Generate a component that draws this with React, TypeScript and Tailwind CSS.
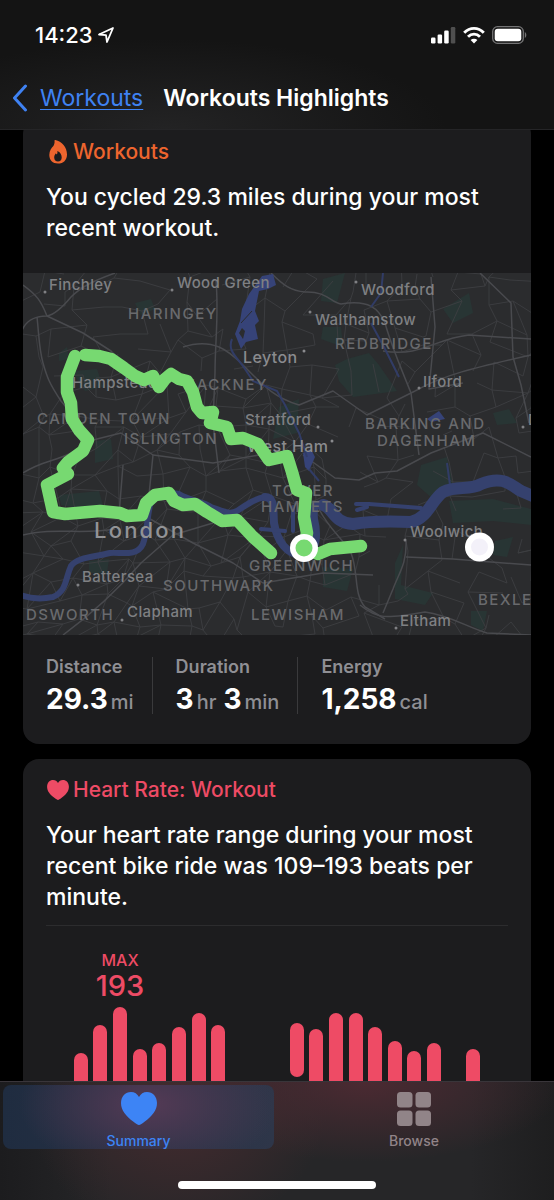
import React from 'react';
import clsx from 'clsx';

type Label = {
  text: string;
  x: number;
  y: number;
  kind: 'town' | 'large' | 'borough' | 'city';
  dot?: [number, number];
};

const labels: Label[] = [
  { text: 'Finchley', x: 26, y: 17, kind: 'town', dot: [22, 19] },
  { text: 'Wood Green', x: 154, y: 15, kind: 'town', dot: [149, 17] },
  { text: 'Woodford', x: 338, y: 22, kind: 'town', dot: [333, 9] },
  { text: 'HARINGEY', x: 105, y: 46, kind: 'borough' },
  { text: 'Walthamstow', x: 292, y: 52, kind: 'town', dot: [287, 39] },
  { text: 'REDBRIDGE', x: 312, y: 76, kind: 'borough' },
  { text: 'Leyton', x: 220, y: 90, kind: 'large', dot: [281, 78] },
  { text: 'Hampstead', x: 49, y: 115, kind: 'town' },
  { text: 'HACKNEY', x: 161, y: 117, kind: 'borough' },
  { text: 'Ilford', x: 400, y: 114, kind: 'town', dot: [396, 115] },
  { text: 'CAMDEN TOWN', x: 14, y: 151, kind: 'borough' },
  { text: 'Stratford', x: 222, y: 152, kind: 'town', dot: [295, 154] },
  { text: 'BARKING AND', x: 342, y: 156, kind: 'borough' },
  { text: 'DAGENHAM', x: 354, y: 173, kind: 'borough' },
  { text: 'D', x: 505, y: 152, kind: 'town', dot: [500, 154] },
  { text: 'ISLINGTON', x: 101, y: 171, kind: 'borough' },
  { text: 'West Ham', x: 224, y: 179, kind: 'large', dot: [309, 168] },
  { text: 'TOWER', x: 249, y: 223, kind: 'borough' },
  { text: 'HAMLETS', x: 238, y: 239, kind: 'borough' },
  { text: 'London', x: 71, y: 265, kind: 'city' },
  { text: 'Woolwich', x: 387, y: 264, kind: 'town', dot: [382, 267] },
  { text: 'GREENWICH', x: 226, y: 298, kind: 'borough' },
  { text: 'Battersea', x: 59, y: 309, kind: 'town', dot: [55, 312] },
  { text: 'SOUTHWARK', x: 140, y: 318, kind: 'borough' },
  { text: 'BEXLE', x: 455, y: 332, kind: 'borough' },
  { text: 'DSWORTH', x: 3, y: 347, kind: 'borough' },
  { text: 'Clapham', x: 104, y: 344, kind: 'town', dot: [99, 347] },
  { text: 'LEWISHAM', x: 228, y: 347, kind: 'borough' },
  { text: 'Eltham', x: 377, y: 353, kind: 'town', dot: [373, 355] },
];

const labelStyles = {
  town: 'fill-[#7f8083] text-[15px] font-medium tracking-wide',
  large: 'fill-[#8a8b8e] text-[16px] font-medium tracking-wide',
  borough: 'fill-[#696a6d] text-[15px] font-medium tracking-widest',
  city: 'fill-[#929396] text-[22px] font-medium tracking-widest',
};

const mainRoads = [
  'M92 0C70 8 58 14 48 24C38 36 30 42 24 43C10 43 2 48 -2 60',
  'M14 44C16 62 16 76 20 90C24 104 26 110 38 128L48 140',
  'M248 0C260 12 268 18 282 19C304 18 308 30 318 31C346 26 356 36 362 50C368 72 376 90 388 120L396 182',
  'M0 12C14 22 18 28 24 43M24 43L60 60L88 78L112 103L140 118',
  'M193 8C196 40 192 70 192 100L190 150L196 200',
  'M160 74C190 64 206 78 220 92C240 112 250 124 276 132L310 118L344 142L392 118',
  'M392 118C420 102 450 95 508 82M360 78C400 84 410 66 446 62L508 66',
  'M280 182L312 205L336 207L352 200L374 198L408 180L460 160L508 184',
  'M296 236C306 256 320 266 328 280C336 300 330 320 342 334L362 346',
  'M337 332C354 346 362 346 402 339C426 342 444 354 464 360L508 362',
  'M0 262C30 254 60 262 92 256M120 242L170 270L210 290L240 310L300 300L350 302',
  'M40 362C70 340 92 320 118 290L150 262L190 250',
  'M383 268C384 290 376 300 370 316L360 340M383 284L430 286L508 292',
  'M0 200C24 184 40 190 66 168L98 160L130 182L190 190L236 182',
  'M96 242L100 192M130 182L124 242',
  'M457 0L488 30L490 84L498 112L506 150',
  'M408 4L412 54L406 116L440 110',
];

const parks = [
  'M36 80L44 74L46 86L36 88ZM50 98L74 96L80 114L62 118L56 110Z',
  'M112 30L128 26L132 36L118 42Z',
  'M72 168L88 166L90 186L72 190Z',
  'M36 222L76 218L80 232L60 236L38 232Z',
  'M66 288L86 286L84 300L66 300Z',
  'M300 6L322 0L314 30L298 28ZM300 54L318 54L320 74L298 66Z',
  'M312 92L324 86L346 80L356 92L374 118L330 124L316 108Z',
  'M420 36L446 20L450 40L430 50Z',
  'M470 140L486 136L494 150L474 152Z',
  'M256 134L276 126L274 160L250 166Z',
  'M300 294L330 296L324 318L300 314Z',
  'M372 290L380 272L378 312L410 320L402 332L372 326Z',
  'M398 192L424 184L430 210L410 226L394 212Z',
  'M426 228L470 226L508 236L508 252L470 248L430 250Z',
  'M448 338L464 338L460 358L448 352Z',
  'M472 268L490 264L484 284L470 282Z',
];

const routes = [
  'M52 83L44 104V119L48 130L49 146L56 157L65 167L60 178L45 189L40 195L45 201L24 212L30 239L42 241L77 238L97 240L104 243L119 242L123 230L132 222L146 220L151 228L160 232L172 231L184 239L199 248L214 247L230 264L248 280',
  'M62 82L76 83L88 86L101 95L112 103L121 107L130 103L136 114L142 106L148 101L156 106L164 108L170 119L174 134L179 140L190 139L187 150L204 154L208 166L220 165L235 171L246 187L264 183L269 199L274 217L283 220L281 244L284 260L281 275L295 281L307 276L338 273',
];

// Side streets: a jittered lattice, tighter towards the centre of the city.
const buildStreets = () => {
  let seed = 41;
  const random = () => {
    seed = (seed * 16807) % 2147483647;
    return seed / 2147483647;
  };
  const cols = 26;
  const rows = 19;
  const points = Array.from({ length: rows }, (_, r) =>
    Array.from({ length: cols }, (_, c) => {
      const px = Math.round(c * 21 - 8 + (random() - 0.5) * 19);
      const py = Math.round(r * 21 - 8 + (random() - 0.5) * 19);
      return [px, py];
    })
  );
  const segments: string[] = [];
  points.forEach((row, r) =>
    row.forEach(([x, y], c) => {
      const density = c < 15 && r > 5 ? 0.86 : 0.55;
      if (c < cols - 1 && random() < density) {
        segments.push(`M${x} ${y}L${row[c + 1].join(' ')}`);
      }
      if (r < rows - 1 && random() < density) {
        segments.push(`M${x} ${y}L${points[r + 1][c].join(' ')}`);
      }
      if (c > 0 && r < rows - 1 && random() < density - 0.5) {
        segments.push(`M${x} ${y}L${points[r + 1][c - 1].join(' ')}`);
      }
    })
  );
  return segments.join('');
};

const streets = buildStreets();

const PX_PER_BPM = 2;
const MAX_BPM = 193;

// One entry per time slot, null where nothing was recorded.
const heartRates: ([number, number] | null)[] = [
  [128, 170],
  [130, 184],
  [134, 193],
  [122, 172],
  [124, 175],
  [131, 183],
  [136, 190],
  [129, 184],
  null,
  null,
  null,
  [158, 185],
  [120, 182],
  [138, 190],
  [132, 190],
  [126, 183],
  [118, 176],
  [109, 171],
  [121, 175],
  null,
  [125, 172],
];

const HeartIcon: React.FC<{ className?: string }> = ({ className }) => (
  <svg viewBox="0 0 36 33" className={className} fill="currentColor" aria-hidden="true">
    <path d="M18 33C16.900 33 14.500 31.300 12.500 29.800C5 24.200 0 18.300 0 11C0 4.500 4.300 0 10 0C13.500 0 16.400 1.900 18 5C19.600 1.900 22.500 0 26 0C31.700 0 36 4.500 36 11C36 18.300 31 24.200 23.500 29.800C21.500 31.300 19.100 33 18 33Z" />
  </svg>
);

const FlameIcon: React.FC = () => (
  <svg viewBox="0 0 18 24" className="h-6 w-[18px]" aria-hidden="true">
    <path
      fill="currentColor"
      fillRule="evenodd"
      d="M5.500 0.600C5.400 0.200 5.800 0 6.300 0.100C12.800 1.300 18 7.200 18 14.400C18 20 14.300 23.500 9 23.500C3.700 23.500 0.300 20 0.300 15C0.300 10.600 2.600 7.800 4.400 5.900C5 5.200 5.900 3.200 5.500 0.600ZM9 21.400C11.200 21.400 12.700 19.800 12.700 17.400C12.700 14.600 11.300 12.500 8.900 11.200C8.500 11 8.300 11.200 8.400 11.600C8.600 12.800 8.400 13.600 7.900 14.500C7.600 14.100 7.400 13.900 7.100 13.700C6.800 13.500 6.600 13.600 6.400 13.900C5.700 14.900 5.200 16 5.200 17.400C5.200 19.800 6.800 21.400 9 21.400Z"
    />
  </svg>
);

const StatusBar = () => (
  <div className="flex h-[70px] items-center justify-between pl-[35px] pr-[27px] text-white">
    <div className="flex items-center gap-1">
      <time className="text-[22px] leading-7 font-medium">14:23</time>
      <svg viewBox="0 0 18 18" className="size-[18px]" fill="none" aria-label="Location in use">
        <path
          d="M16 2L2 8.500L9 9.200L10 16Z"
          stroke="currentColor"
          strokeWidth="1.800"
          strokeLinejoin="round"
        />
      </svg>
    </div>
    <div className="flex items-center gap-[7px]">
      <svg viewBox="0 0 25 18" className="h-[18px] w-[25px]" fill="currentColor" aria-label="Signal">
        <rect x="0" y="11.500" width="4.500" height="6" rx="1.200" />
        <rect x="6.600" y="8.500" width="4.500" height="9" rx="1.200" />
        <rect x="13.200" y="4.500" width="4.500" height="13" rx="1.200" />
        <rect x="19.800" y="1" width="4.500" height="16.500" rx="1.200" opacity="0.250" />
      </svg>
      <svg viewBox="0 0 22 18" className="h-[18px] w-[22px]" aria-label="Wi-Fi">
        <g fill="none" stroke="currentColor" strokeWidth="2.900">
          <path d="M1.200 6.800C6.800 0.900 15.200 0.900 20.800 6.800" />
          <path d="M5 10.700C8.500 7.200 13.500 7.200 17 10.700" />
        </g>
        <path d="M11 17.500L7.600 14C9.500 12.300 12.500 12.300 14.400 14Z" fill="currentColor" />
      </svg>
      <svg viewBox="0 0 35 18" className="h-[18px] w-[35px]" aria-label="Battery">
        <rect x="0.700" y="0.700" width="30.600" height="16.600" rx="4.800" fill="none" stroke="#747475" strokeWidth="1.300" />
        <rect x="2.700" y="2.700" width="26.600" height="12.600" rx="3" fill="currentColor" />
        <path d="M32.800 6C34.800 7 34.800 11 32.800 12Z" fill="#747475" />
      </svg>
    </div>
  </div>
);

const RouteMap = () => (
  <svg
    viewBox="0 0 508 362"
    className="block h-auto w-full bg-[#2b2c2e]"
    role="img"
    aria-label="Map of the cycling route through London"
  >
    <path d={parks.join('')} fill="#283534" />
    <path d={streets} fill="none" stroke="#3d3e42" strokeWidth="0.900" />
    <g fill="none" stroke="#494a4e" strokeWidth="1.500" strokeLinejoin="round">
      {mainRoads.map((d) => (
        <path key={d} d={d} />
      ))}
    </g>

    {/* reservoirs and the Lea */}
    <g fill="#364378">
      <path d="M239 3L250 1L253 12L245 16L236 18L232 38L236 48L232 52L235 66L223 69L218 76L212 61L217 48L219 36L226 21Z" />
      <path d="M404 146L416 138L422 146L408 149Z" />
      <path d="M280 180L288 176L292 184L286 198L282 194Z" />
    </g>
    <path d="M219 55L222 58L220 66L216 60Z" fill="#2b2c2e" />
    <path d="M229 38L218 50" fill="none" stroke="#2b2c2e" />
    <path
      d="M209 66C204 78 214 84 222 96L230 108L254 118L262 132L276 160L284 184M360 0L358 20L348 34M348 50L362 76L376 104M286 196L296 208M424 190L427 212"
      fill="none"
      stroke="#313c66"
      strokeWidth="2"
    />

    {/* Thames */}
    <g fill="none" stroke="#35416e" strokeLinejoin="round" strokeLinecap="round">
      <path
        strokeWidth="6"
        d="M-3 322C8 326 20 326 30 324C44 318 42 306 48 293C54 284 72 284 87 280C98 279 114 284 120 271C124 260 124 246 127 232C132 222 142 218 156 221C168 228 180 228 188 234C200 238 206 242 214 238C226 230 232 226 242 224"
      />
      <path strokeWidth="8" d="M242 224C252 224 250 236 251 250C254 268 264 282 279 282C296 280 294 258 291 246C290 234 292 230 300 232" />
      <path
        strokeWidth="12"
        d="M300 232C310 234 310 250 330 251C348 248 364 248 388 249C404 246 408 228 420 219C434 212 446 218 458 211C480 202 488 212 498 218L512 224"
      />
      <path strokeWidth="4" d="M333 231H346L398 235M334 237L344 234M270 234V258M262 258L238 256" />
    </g>

    {labels.map(({ text, x, y, kind, dot }) => (
      <g key={text} className={labelStyles[kind]}>
        {dot && <circle cx={dot[0]} cy={dot[1]} r="1.500" />}
        <text x={x} y={y}>
          {text}
        </text>
      </g>
    ))}

    <g fill="none" stroke="#77d971" strokeWidth="12.500" strokeLinecap="round" strokeLinejoin="round">
      {routes.map((d) => (
        <path key={d} d={d} />
      ))}
    </g>
    <circle cx="281" cy="275" r="14" fill="#fff" />
    <circle cx="281" cy="275" r="8.500" fill="#77d971" />
    <circle cx="456.500" cy="274" r="14.500" fill="#fff" />
    <circle cx="456.500" cy="274" r="8.500" fill="#f3f1f9" />
  </svg>
);

const stats = [
  { name: 'Distance', parts: [['29.3', 'mi']] },
  { name: 'Duration', parts: [['3', 'hr'], ['3', 'min']] },
  { name: 'Energy', parts: [['1,258', 'cal']] },
];

const WorkoutCard = () => (
  <section className="-mt-3 overflow-hidden rounded-2xl bg-[#1c1c1e]">
    <div className="px-[23px] pt-5 pb-[29px]">
      <h2 className="flex items-center gap-1.5 pl-[3px] text-[21px] leading-7 font-medium text-[#ee652e]">
        <FlameIcon />
        Workouts
      </h2>
      <p className="mt-4 text-[23px] leading-[31px] font-medium text-white">
        You cycled 29.3 miles during your most recent workout.
      </p>
    </div>
    <RouteMap />
    <dl className="flex px-[23px] pt-[22px] pb-[30px]">
      {stats.map(({ name, parts }, idx) => (
        <div
          key={name}
          className={clsx('h-[57px]', idx > 0 && 'ml-[18px] border-l border-[#3a3a3c] pl-[23px]')}
        >
          <dt className="text-[18px] leading-5 font-semibold text-[#8f8f94]">{name}</dt>
          <dd className="mt-1 flex gap-[7px] leading-9">
            {parts.map(([value, unit]) => (
              <span key={unit} className="flex items-baseline gap-[3px]">
                <span className="text-[28px] font-bold text-white">{value}</span>
                <span className="text-[20px] font-medium text-[#8f8f94]">{unit}</span>
              </span>
            ))}
          </dd>
        </div>
      ))}
    </dl>
  </section>
);

const HeartRateCard = () => (
  <section className="mt-[15px] rounded-2xl bg-[#1c1c1e] px-[23px] pt-[17px] pb-6">
    <h2 className="flex items-center gap-1 pl-px text-[21px] leading-7 font-medium text-[#ee4b65]">
      <HeartIcon className="h-5 w-[22px]" />
      Heart Rate: Workout
    </h2>
    <p className="mt-4 text-[23px] leading-[31px] font-medium text-white">
      Your heart rate range during your most recent bike ride was 109–193 beats per minute.
    </p>
    <hr className="mt-3 border-[#2c2c2e]" />
    <div className="mt-6 px-[25px]">
      <div className="w-5/21 text-center font-medium text-[#ee4b65]">
        <div className="text-base leading-5">MAX</div>
        <div className="text-[29px] leading-8">{MAX_BPM}</div>
      </div>
      <div className="mt-[5px] flex h-[168px]">
        {heartRates.map((range, idx) => (
          <div key={idx} className="flex flex-1 justify-center">
            {range && (
              <div
                className="w-3.5 rounded-full bg-[#ee4b65]"
                style={{
                  marginTop: (MAX_BPM - range[1]) * PX_PER_BPM,
                  height: (range[1] - range[0]) * PX_PER_BPM,
                }}
              />
            )}
          </div>
        ))}
      </div>
    </div>
  </section>
);

const TabBar = () => (
  <nav className="shrink-0 border-t border-[#39353a] bg-[#262628] bg-[radial-gradient(ellipse_200px_80px_at_66%_0%,#4b2a32,transparent),radial-gradient(ellipse_150px_130px_at_32%_20%,#452b2f,transparent),linear-gradient(90deg,#1c1c1e,transparent_20%,transparent_85%,#1e1e1f)] px-[3px] pt-[3px] pb-[11px]">
    <div className="grid grid-cols-2">
      <button
        type="button"
        aria-current="page"
        className="mr-[3px] flex h-16 flex-col items-center rounded-lg bg-[radial-gradient(ellipse_130px_70px_at_54%_30%,#543a55,transparent),linear-gradient(90deg,#1f2c40,#2e3649)] pt-[7px] text-[#3d84f5]"
      >
        <HeartIcon className="h-[33px] w-9" />
        <span className="mt-2 text-[14px] leading-4 font-medium">Summary</span>
      </button>
      <button type="button" className="flex h-16 flex-col items-center pt-[7px] text-[#918488]">
        <svg viewBox="0 0 34 34" className="size-[34px]" fill="currentColor" aria-hidden="true">
          <rect width="15.500" height="15.500" rx="3.500" />
          <rect x="18.500" width="15.500" height="15.500" rx="3.500" />
          <rect y="18.500" width="15.500" height="15.500" rx="3.500" />
          <rect x="18.500" y="18.500" width="15.500" height="15.500" rx="3.500" />
        </svg>
        <span className="mt-[7px] text-[14px] leading-4 font-medium">Browse</span>
      </button>
    </div>
    <div className="mx-auto mt-8 h-2 w-[198px] rounded-full bg-white" />
  </nav>
);

const App: React.FC = () => {
  return (
    <div className="flex h-screen flex-col bg-black font-['Inter','Liberation_Sans',sans-serif]">
      <header className="z-10 h-[130px] shrink-0 border-b border-[#252527] bg-[#141414] bg-[radial-gradient(ellipse_280px_90px_at_30%_100%,#232324,transparent)]">
        <StatusBar />
        <div className="flex h-14 items-center pl-3">
          <a href="#workouts" className="flex items-center gap-3 text-[#3f82f3]">
            <svg viewBox="0 0 16 28" className="h-7 w-4" fill="none" aria-hidden="true">
              <path
                d="M13.500 2L2.500 14L13.500 26"
                stroke="currentColor"
                strokeWidth="3"
                strokeLinecap="round"
                strokeLinejoin="round"
              />
            </svg>
            <span className="text-[23px] leading-7 underline decoration-1 underline-offset-3">Workouts</span>
          </a>
          <h1 className="ml-5 text-[23px] leading-7 font-semibold text-white">Workouts Highlights</h1>
        </div>
      </header>
      <main className="min-h-0 flex-1 overflow-y-auto px-[23px] [scrollbar-width:none]">
        <WorkoutCard />
        <HeartRateCard />
      </main>
      <TabBar />
    </div>
  );
};

export default App;
